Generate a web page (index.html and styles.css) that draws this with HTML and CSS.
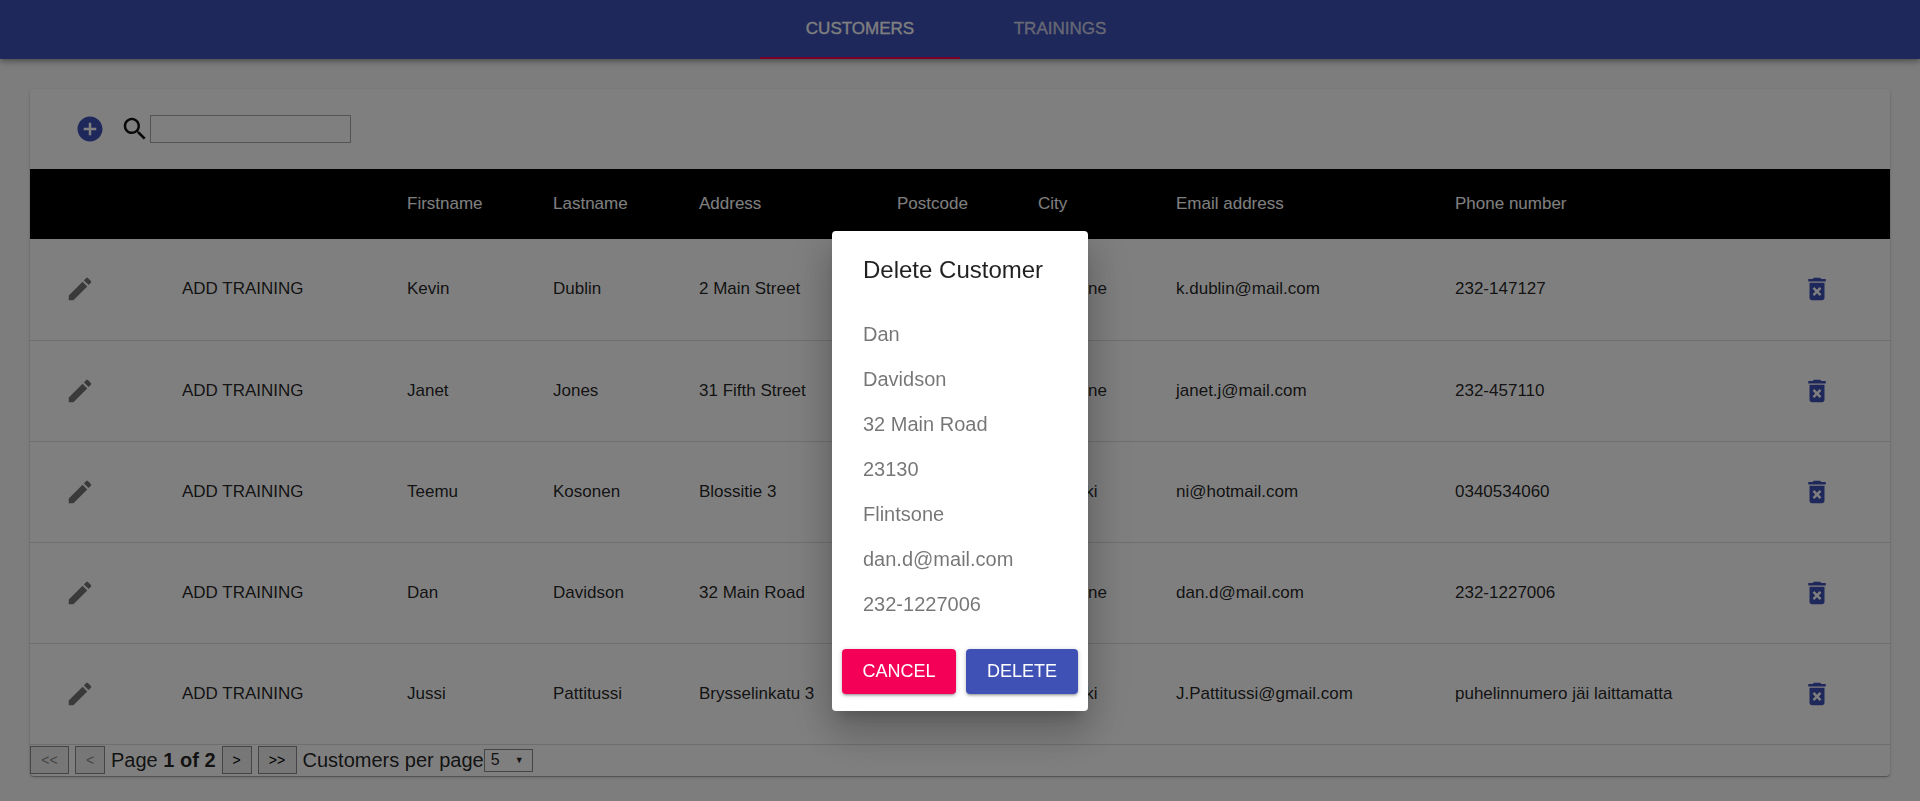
FILE: index.html
```html
<!DOCTYPE html>
<html lang="en">
<head>
    <meta charset="UTF-8">
    <meta name="viewport" content="width=device-width, initial-scale=1.0">
    <title>Customers</title>
    <link rel="stylesheet" href="styles.css">
</head>
<body>
    <header class="appbar">
        <nav class="tabs">
            <a class="tab tab-active">CUSTOMERS</a>
            <a class="tab">TRAININGS</a>
        </nav>
    </header>

    <main class="card">
        <div class="toolbar">
            <svg class="icon icon-add" viewBox="0 0 24 24"><path d="M12 2C6.48 2 2 6.48 2 12s4.48 10 10 10 10-4.48 10-10S17.52 2 12 2zm5 11h-4v4h-2v-4H7v-2h4V7h2v4h4v2z"/></svg>
            <svg class="icon icon-search" viewBox="0 0 24 24"><path d="M15.5 14h-.79l-.28-.27C15.41 12.59 16 11.11 16 9.5 16 5.91 13.09 3 9.5 3S3 5.91 3 9.5 5.91 16 9.5 16c1.61 0 3.09-.59 4.23-1.57l.27.28v.79l5 4.99L20.49 19l-4.99-5zm-6 0C7.01 14 5 11.99 5 9.5S7.01 5 9.5 5 14 7.01 14 9.5 11.99 14 9.5 14z"/></svg>
            <input class="search" type="text">
        </div>

        <table class="customers">
            <colgroup>
                <col class="col-edit">
                <col class="col-train">
                <col class="col-first">
                <col class="col-last">
                <col class="col-address">
                <col class="col-post">
                <col class="col-city">
                <col class="col-email">
                <col class="col-phone">
                <col>
            </colgroup>
            <thead>
                <tr>
                    <th></th>
                    <th></th>
                    <th>Firstname</th>
                    <th>Lastname</th>
                    <th>Address</th>
                    <th>Postcode</th>
                    <th>City</th>
                    <th>Email address</th>
                    <th>Phone number</th>
                    <th></th>
                </tr>
            </thead>
            <tbody>
                <tr>
                    <td><svg class="icon icon-edit" viewBox="0 0 24 24"><path d="M3 17.25V21h3.75L17.81 9.94l-3.75-3.75L3 17.25zM20.71 7.04c.39-.39.39-1.02 0-1.41l-2.34-2.34c-.39-.39-1.02-.39-1.41 0l-1.83 1.83 3.75 3.75 1.83-1.83z"/></svg></td>
                    <td>ADD TRAINING</td>
                    <td>Kevin</td>
                    <td>Dublin</td>
                    <td>2 Main Street</td>
                    <td>23110</td>
                    <td>Flintsone</td>
                    <td>k.dublin@mail.com</td>
                    <td>232-147127</td>
                    <td><svg class="icon icon-delete" viewBox="0 0 24 24"><path d="M6 19c0 1.1.9 2 2 2h8c1.100 0 2-.9 2-2V7H6v12zm2.460-7.120l1.410-1.410L12 12.590l2.120-2.120 1.410 1.410L13.410 14l2.120 2.120-1.410 1.410L12 15.410l-2.120 2.120-1.410-1.410L10.590 14l-2.130-2.120zM15.500 4l-1-1h-5l-1 1H5v2h14V4z"/></svg></td>
                </tr>
                <tr>
                    <td><svg class="icon icon-edit" viewBox="0 0 24 24"><path d="M3 17.25V21h3.75L17.81 9.94l-3.75-3.75L3 17.25zM20.71 7.04c.39-.39.39-1.02 0-1.41l-2.34-2.34c-.39-.39-1.02-.39-1.41 0l-1.83 1.83 3.75 3.75 1.83-1.83z"/></svg></td>
                    <td>ADD TRAINING</td>
                    <td>Janet</td>
                    <td>Jones</td>
                    <td>31 Fifth Street</td>
                    <td>23120</td>
                    <td>Flintsone</td>
                    <td>janet.j@mail.com</td>
                    <td>232-457110</td>
                    <td><svg class="icon icon-delete" viewBox="0 0 24 24"><path d="M6 19c0 1.1.9 2 2 2h8c1.100 0 2-.9 2-2V7H6v12zm2.460-7.120l1.410-1.410L12 12.590l2.120-2.120 1.410 1.410L13.410 14l2.120 2.120-1.410 1.410L12 15.410l-2.120 2.120-1.410-1.410L10.590 14l-2.130-2.120zM15.500 4l-1-1h-5l-1 1H5v2h14V4z"/></svg></td>
                </tr>
                <tr>
                    <td><svg class="icon icon-edit" viewBox="0 0 24 24"><path d="M3 17.25V21h3.75L17.81 9.94l-3.75-3.75L3 17.25zM20.71 7.04c.39-.39.39-1.02 0-1.41l-2.34-2.34c-.39-.39-1.02-.39-1.41 0l-1.83 1.83 3.75 3.75 1.83-1.83z"/></svg></td>
                    <td>ADD TRAINING</td>
                    <td>Teemu</td>
                    <td>Kosonen</td>
                    <td>Blossitie 3</td>
                    <td>00100</td>
                    <td>Helsinki</td>
                    <td>ni@hotmail.com</td>
                    <td>0340534060</td>
                    <td><svg class="icon icon-delete" viewBox="0 0 24 24"><path d="M6 19c0 1.1.9 2 2 2h8c1.100 0 2-.9 2-2V7H6v12zm2.460-7.120l1.410-1.410L12 12.590l2.120-2.120 1.410 1.410L13.410 14l2.120 2.120-1.410 1.410L12 15.410l-2.120 2.120-1.410-1.410L10.590 14l-2.130-2.120zM15.500 4l-1-1h-5l-1 1H5v2h14V4z"/></svg></td>
                </tr>
                <tr>
                    <td><svg class="icon icon-edit" viewBox="0 0 24 24"><path d="M3 17.25V21h3.75L17.81 9.94l-3.75-3.75L3 17.25zM20.71 7.04c.39-.39.39-1.02 0-1.41l-2.34-2.34c-.39-.39-1.02-.39-1.41 0l-1.83 1.83 3.75 3.75 1.83-1.83z"/></svg></td>
                    <td>ADD TRAINING</td>
                    <td>Dan</td>
                    <td>Davidson</td>
                    <td>32 Main Road</td>
                    <td>23130</td>
                    <td>Flintsone</td>
                    <td>dan.d@mail.com</td>
                    <td>232-1227006</td>
                    <td><svg class="icon icon-delete" viewBox="0 0 24 24"><path d="M6 19c0 1.1.9 2 2 2h8c1.100 0 2-.9 2-2V7H6v12zm2.460-7.120l1.410-1.410L12 12.590l2.120-2.120 1.410 1.410L13.410 14l2.120 2.120-1.410 1.410L12 15.410l-2.120 2.120-1.410-1.410L10.590 14l-2.130-2.120zM15.500 4l-1-1h-5l-1 1H5v2h14V4z"/></svg></td>
                </tr>
                <tr>
                    <td><svg class="icon icon-edit" viewBox="0 0 24 24"><path d="M3 17.25V21h3.75L17.81 9.94l-3.75-3.75L3 17.25zM20.71 7.04c.39-.39.39-1.02 0-1.41l-2.34-2.34c-.39-.39-1.02-.39-1.41 0l-1.83 1.83 3.75 3.75 1.83-1.83z"/></svg></td>
                    <td>ADD TRAINING</td>
                    <td>Jussi</td>
                    <td>Pattitussi</td>
                    <td>Brysselinkatu 3</td>
                    <td>00200</td>
                    <td>Helsinki</td>
                    <td>J.Pattitussi@gmail.com</td>
                    <td>puhelinnumero jäi laittamatta</td>
                    <td><svg class="icon icon-delete" viewBox="0 0 24 24"><path d="M6 19c0 1.1.9 2 2 2h8c1.100 0 2-.9 2-2V7H6v12zm2.460-7.120l1.410-1.410L12 12.590l2.120-2.120 1.410 1.410L13.410 14l2.120 2.120-1.410 1.410L12 15.410l-2.120 2.120-1.410-1.410L10.590 14l-2.130-2.120zM15.500 4l-1-1h-5l-1 1H5v2h14V4z"/></svg></td>
                </tr>
            </tbody>
        </table>

        <div class="pager">
            <button class="page-btn page-btn-off">&lt;&lt;</button>
            <button class="page-btn page-btn-off page-btn-small">&lt;</button>
            <span class="page-label">Page <b>1 of 2</b></span>
            <button class="page-btn page-btn-small">&gt;</button>
            <button class="page-btn">&gt;&gt;</button>
            <span class="page-label page-label-per">Customers per page</span>
            <div class="page-select">5<span class="caret">▼</span></div>
        </div>
    </main>

    <div class="overlay">
        <div class="dialog">
            <h2>Delete Customer</h2>
            <div class="dialog-lines">
                <p>Dan</p>
                <p>Davidson</p>
                <p>32 Main Road</p>
                <p>23130</p>
                <p>Flintsone</p>
                <p>dan.d@mail.com</p>
                <p>232-1227006</p>
            </div>
            <div class="dialog-actions">
                <button class="btn btn-cancel">CANCEL</button>
                <button class="btn btn-delete">DELETE</button>
            </div>
        </div>
    </div>
</body>
</html>
```

FILE: styles.css
```css
* {
    box-sizing: border-box;
}
html, body {
    height: 100%;
}
body {
    font-family: "Liberation Sans", Arial, sans-serif;
    background-color: #fafafa;
    color: rgba(0, 0, 0, 0.87);
    margin: 0;
    padding-bottom: 25px;
    overflow: hidden;
}
.appbar {
    background-color: #3f51b5;
    height: 59px;
    box-shadow: 0 2px 4px -1px rgba(0, 0, 0, 0.2), 0 4px 5px 0 rgba(0, 0, 0, 0.14), 0 1px 10px 0 rgba(0, 0, 0, 0.12);
}
.tabs {
    display: flex;
    justify-content: center;
    height: 100%;
}
.tab {
    width: 200px;
    height: 59px;
    padding-top: 19px;
    text-align: center;
    font-size: 17px;
    font-weight: 500;
    -webkit-text-stroke: 0.3px currentColor;
    color: rgba(255, 255, 255, 0.7);
}
.tab-active {
    color: #fff;
    border-bottom: 2px solid #f50057;
}
.card {
    margin: 30px 30px 0;
    height: 687px;
    background: #fff;
    border-radius: 4px;
    box-shadow: 0 1px 3px 0 rgba(0, 0, 0, 0.2), 0 1px 1px 0 rgba(0, 0, 0, 0.14), 0 2px 1px -1px rgba(0, 0, 0, 0.12);
}
.toolbar {
    display: flex;
    align-items: center;
    height: 80px;
    padding-left: 45px;
}
.icon {
    display: block;
    width: 30px;
    height: 30px;
}
.icon-add, .icon-delete {
    fill: #3f51b5;
}
.icon-search {
    fill: #111;
    margin-left: 15px;
}
.icon-edit {
    fill: rgba(0, 0, 0, 0.54);
    margin-left: 35px;
}
.icon-delete {
    margin-left: 7px;
}
.search {
    width: 201px;
    height: 28px;
    margin-left: 0;
    border: 1px solid #a9a9a9;
    background: transparent;
}
.customers {
    width: 100%;
    table-layout: fixed;
    border-collapse: collapse;
    font-size: 17px;
}
.col-edit { width: 152px; }
.col-train { width: 225px; }
.col-first { width: 146px; }
.col-last { width: 146px; }
.col-address { width: 198px; }
.col-post { width: 141px; }
.col-city { width: 138px; }
.col-email { width: 279px; }
.col-phone { width: 340px; }
.customers th {
    background: #000;
    color: #fff;
    height: 70px;
    text-align: left;
    font-weight: normal;
    padding: 0;
}
.customers td {
    height: 101px;
    padding: 0;
    border-bottom: 1px solid #ddd;
}
.pager {
    display: flex;
    align-items: center;
    height: 31px;
    font-size: 20px;
}
.page-btn {
    width: 39px;
    height: 28px;
    padding: 0;
    margin-right: 6px;
    background: #efefef;
    border: 1px solid #8a8a8a;
    font-family: inherit;
    font-size: 14px;
    color: #000;
}
.page-btn-small {
    width: 30px;
}
.page-btn-off {
    color: #8a8a8a;
}
.page-label {
    margin-right: 6px;
}
.page-label-per {
    margin-right: 0;
}
.page-select {
    display: flex;
    justify-content: space-between;
    align-items: center;
    width: 49px;
    height: 23px;
    padding: 0 8px 0 6px;
    border: 1px solid #8a8a8a;
    font-size: 16px;
}
.caret {
    font-size: 9px;
}
.overlay {
    position: fixed;
    top: 0;
    left: 0;
    right: 0;
    bottom: 0;
    display: flex;
    justify-content: center;
    align-items: flex-start;
    padding-top: 231px;
    background: rgba(0, 0, 0, 0.5);
}
.dialog {
    width: 256px;
    height: 480px;
    background: #fff;
    border-radius: 4px;
    box-shadow: 0 11px 15px -7px rgba(0, 0, 0, 0.2), 0 24px 38px 3px rgba(0, 0, 0, 0.14), 0 9px 46px 8px rgba(0, 0, 0, 0.12);
}
.dialog h2 {
    margin: 0;
    padding: 25px 0 0 31px;
    font-size: 24px;
    line-height: 28px;
    font-weight: normal;
}
.dialog-lines {
    padding: 28px 0 0 31px;
    font-size: 20px;
    color: rgba(0, 0, 0, 0.54);
}
.dialog-lines p {
    margin: 0;
    height: 45px;
    line-height: 45px;
}
.dialog-actions {
    display: flex;
    gap: 10px;
    padding: 22px 10px 0;
}
.btn {
    height: 45px;
    border: none;
    border-radius: 4px;
    color: #fff;
    font-family: inherit;
    font-size: 18px;
    box-shadow: 0 1px 5px 0 rgba(0, 0, 0, 0.2), 0 2px 2px 0 rgba(0, 0, 0, 0.14), 0 3px 1px -2px rgba(0, 0, 0, 0.12);
}
.btn-cancel {
    width: 114px;
    background: #f50057;
}
.btn-delete {
    width: 112px;
    background: #3f51b5;
}
```
